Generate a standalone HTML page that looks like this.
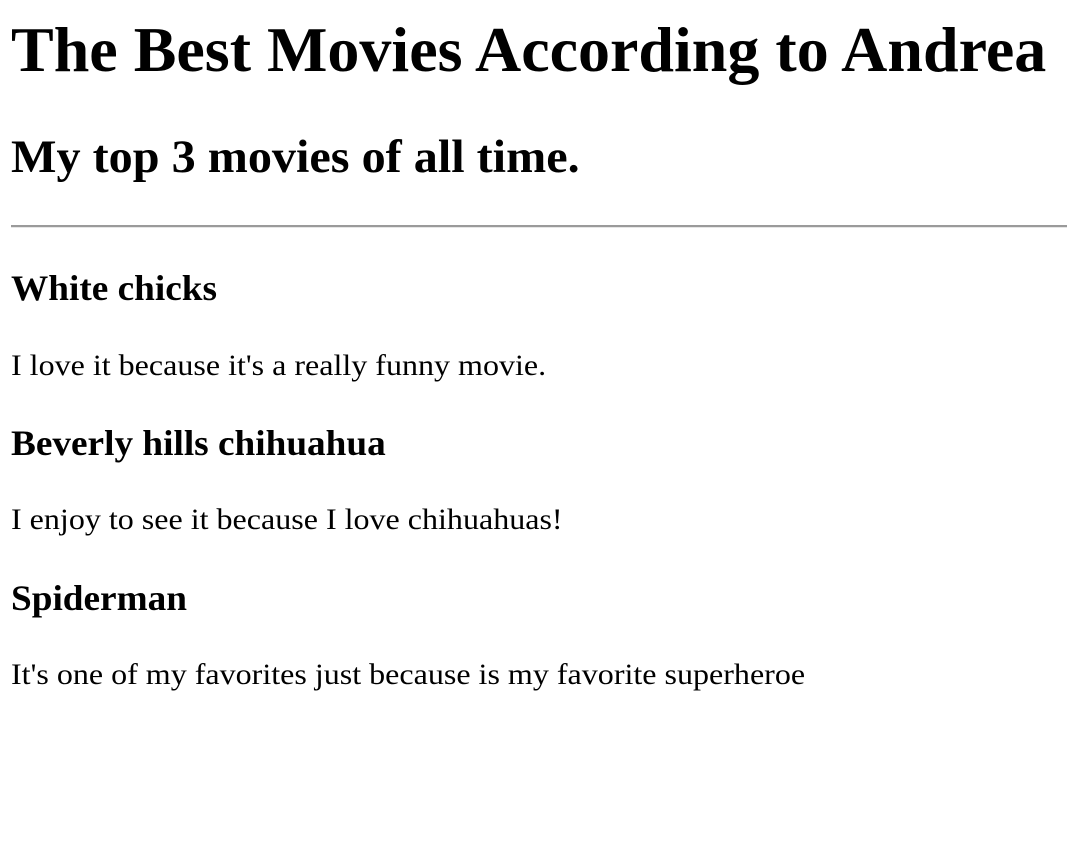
<!DOCTYPE html>
<html><head><meta charset="utf-8"><style>
body{margin:0;background:#fff;color:#000;font-family:"Liberation Serif",serif;}
.t{position:absolute;left:11px;line-height:1;white-space:nowrap;transform-origin:0 0;}
.b{font-weight:bold;}
.h3{font-size:36px;font-weight:bold;transform:scaleX(1.035);}
.p{font-size:30px;transform:scaleX(1.068);}
hr{position:absolute;left:11px;right:0;top:225px;margin:0;border:0;border-top:2px solid #9a9a9a;border-bottom:1px solid #e6e6e6;height:0;}
</style></head><body>
<div class="t b" style="font-size:64px;top:18px;">The Best Movies According to Andrea</div>
<div class="t b" style="font-size:47px;top:134px;transform:scaleX(1.025);">My top 3 movies of all time.</div>
<hr>
<div class="t h3" style="top:270px;">White chicks</div>
<div class="t p" style="top:351px;">I love it because it's a really funny movie.</div>
<div class="t h3" style="top:425px;">Beverly hills chihuahua</div>
<div class="t p" style="top:505px;">I enjoy to see it because I love chihuahuas!</div>
<div class="t h3" style="top:580px;">Spiderman</div>
<div class="t p" style="top:660px;">It's one of my favorites just because is my favorite superheroe</div>
</body></html>
